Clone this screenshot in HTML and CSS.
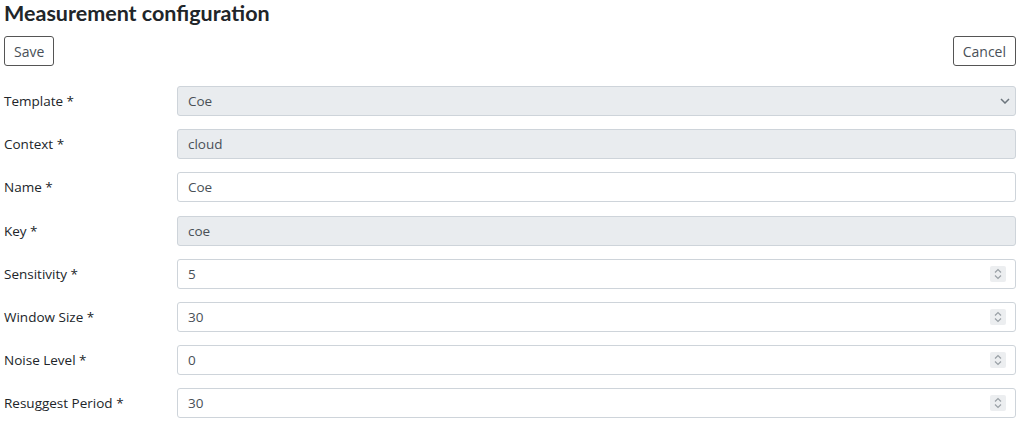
FILE: index.html
```html
<!DOCTYPE html>
<html lang="en">
<head>
    <meta charset="UTF-8">
    <meta name="viewport" content="width=device-width, initial-scale=1.0">
    <title>Measurement configuration</title>
    <link rel="stylesheet" href="styles.css">
</head>
<body>
    <div class="page">
        <h2>Measurement configuration</h2>
        <div class="actions">
            <button type="button">Save</button>
            <button type="button">Cancel</button>
        </div>
        <form class="form">
            <div class="row">
                <label for="template">Template *</label>
                <div class="field">
                    <select id="template" class="input" disabled>
                        <option>Coe</option>
                    </select>
                    <svg class="chevron" width="10" height="6" viewBox="0 0 10 6"><path d="M1 1l4 4 4-4" fill="none" stroke="#6c757d" stroke-width="1.5"/></svg>
                </div>
            </div>
            <div class="row">
                <label for="context">Context *</label>
                <div class="field"><input id="context" class="input" type="text" value="cloud" disabled></div>
            </div>
            <div class="row">
                <label for="name">Name *</label>
                <div class="field"><input id="name" class="input" type="text" value="Coe"></div>
            </div>
            <div class="row">
                <label for="key">Key *</label>
                <div class="field"><input id="key" class="input" type="text" value="coe" disabled></div>
            </div>
            <div class="row">
                <label for="sensitivity">Sensitivity *</label>
                <div class="field">
                    <input id="sensitivity" class="input" type="text" value="5">
                    <span class="spin"><svg width="8" height="12" viewBox="0 0 8 12"><path d="M1 4.5l3-3 3 3M1 7.5l3 3 3-3" fill="none" stroke="#9aa0a6" stroke-width="1.2"/></svg></span>
                </div>
            </div>
            <div class="row">
                <label for="windowSize">Window Size *</label>
                <div class="field">
                    <input id="windowSize" class="input" type="text" value="30">
                    <span class="spin"><svg width="8" height="12" viewBox="0 0 8 12"><path d="M1 4.5l3-3 3 3M1 7.5l3 3 3-3" fill="none" stroke="#9aa0a6" stroke-width="1.2"/></svg></span>
                </div>
            </div>
            <div class="row">
                <label for="noise">Noise Level *</label>
                <div class="field">
                    <input id="noise" class="input" type="text" value="0">
                    <span class="spin"><svg width="8" height="12" viewBox="0 0 8 12"><path d="M1 4.5l3-3 3 3M1 7.5l3 3 3-3" fill="none" stroke="#9aa0a6" stroke-width="1.2"/></svg></span>
                </div>
            </div>
            <div class="row">
                <label for="resuggest">Resuggest Period *</label>
                <div class="field">
                    <input id="resuggest" class="input" type="text" value="30">
                    <span class="spin"><svg width="8" height="12" viewBox="0 0 8 12"><path d="M1 4.5l3-3 3 3M1 7.5l3 3 3-3" fill="none" stroke="#9aa0a6" stroke-width="1.2"/></svg></span>
                </div>
            </div>
        </form>
    </div>
</body>
</html>
```

FILE: styles.css
```css
body {
    font-family: "Open Sans", Lato, sans-serif;
    color: #212529;
    background-color: #fff;
    margin: 0;
    padding: 0;
}
.page {
    padding: 0 8px 0 4px;
}
h2 {
    margin: 0;
    font-family: Lato, sans-serif;
    font-size: 21.5px;
    line-height: 26px;
    font-weight: 700;
    color: #212529;
}
.actions {
    display: flex;
    justify-content: space-between;
    margin-top: 10px;
}
button {
    height: 30px;
    padding: 0 9px;
    font-family: "Open Sans", sans-serif;
    font-size: 14px;
    color: #495057;
    background-color: #fff;
    border: 1px solid #555;
    border-radius: 3px;
    cursor: pointer;
}
.form {
    display: grid;
    row-gap: 13.2px;
    margin-top: 20px;
}
.row {
    display: grid;
    grid-template-columns: 173px 1fr;
    align-items: center;
}
label {
    font-size: 13.5px;
    color: #212529;
}
.field {
    position: relative;
}
.input {
    display: block;
    width: 100%;
    height: 30px;
    padding: 0 10px;
    font-family: "Open Sans", sans-serif;
    font-size: 13.5px;
    color: #495057;
    background-color: #fff;
    border: 1px solid #ced4da;
    border-radius: 3px;
    box-sizing: border-box;
    outline: none;
    -webkit-appearance: none;
    appearance: none;
}
.input:disabled {
    background-color: #e9ecef;
    color: #495057;
    opacity: 1;
}
.chevron {
    position: absolute;
    right: 6px;
    top: 12px;
}
.spin {
    position: absolute;
    right: 10px;
    top: 7px;
    width: 16px;
    height: 16px;
    display: flex;
    align-items: center;
    justify-content: center;
    background-color: #eceef0;
    border-radius: 2px;
}
```
